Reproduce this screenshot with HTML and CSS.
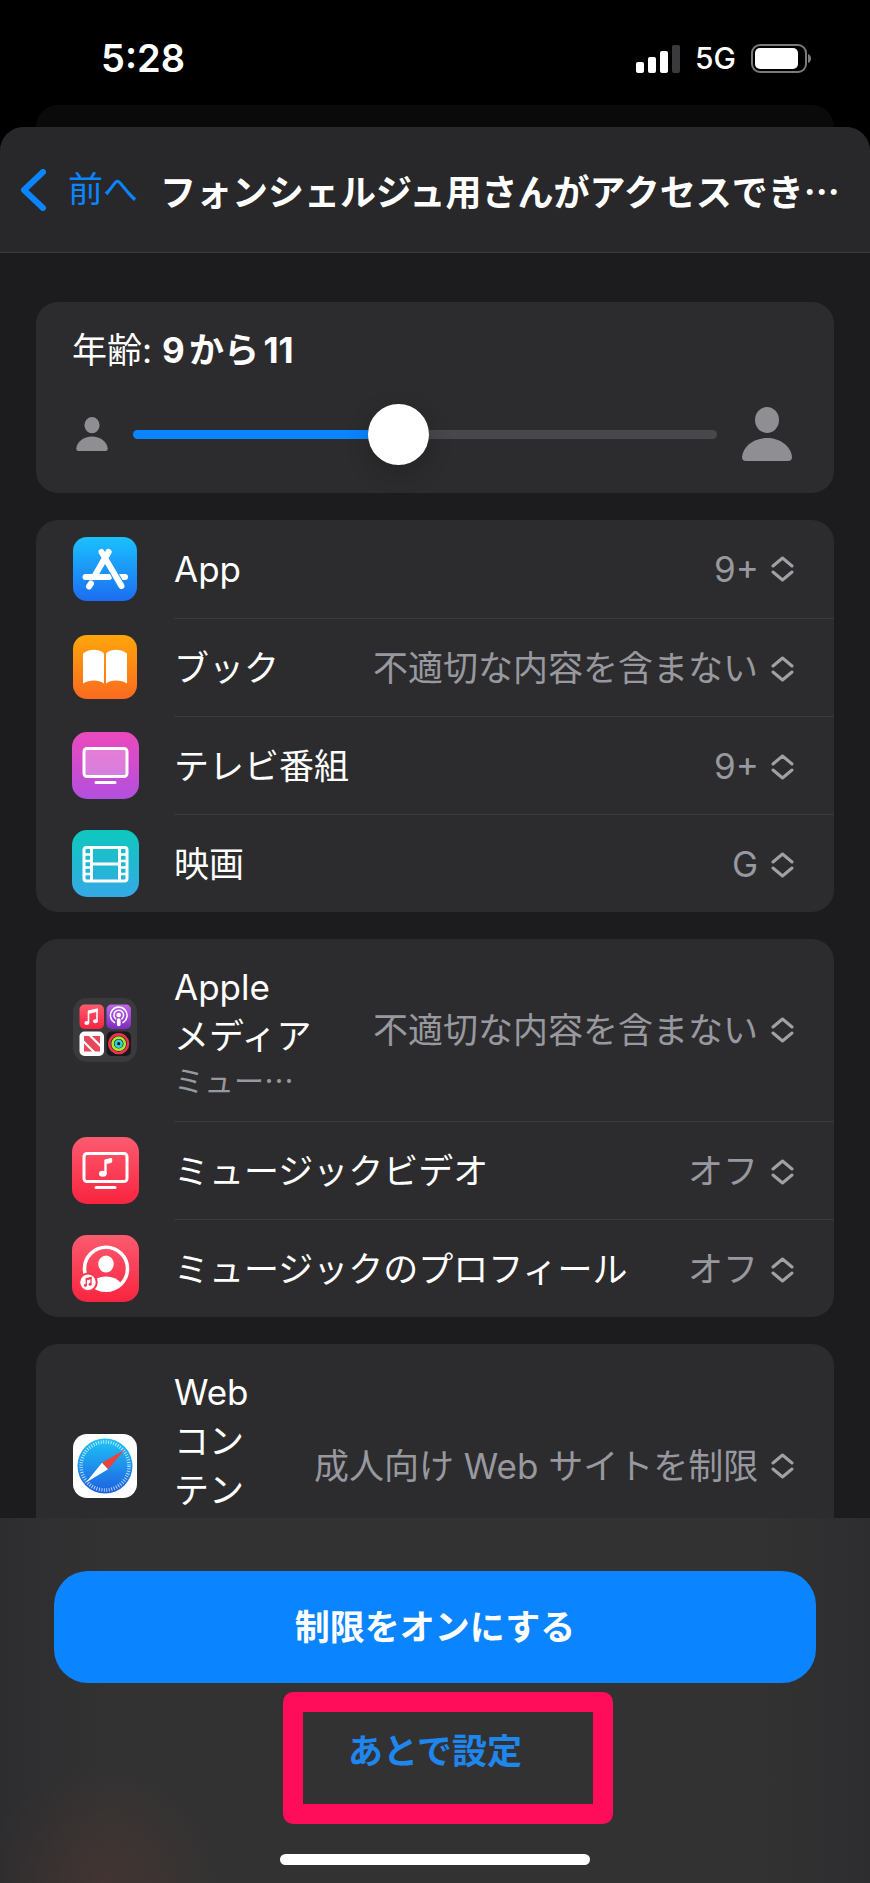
FILE: index.html
```html
<!DOCTYPE html>
<html lang="ja">
<head>
  <meta charset="UTF-8" />
  <meta name="viewport" content="width=device-width, initial-scale=1.0" />
  <title>コンテンツの制限</title>
  <link rel="stylesheet" href="styles.css">
</head>
<body>
  <div class="status-bar">
    <span class="time">5:28</span>
    <div class="status-icons">
      <svg width="44" height="28" viewBox="0 0 44 28" fill="#fff">
        <rect x="0" y="17" width="8" height="11" rx="2" />
        <rect x="12" y="12" width="8" height="16" rx="2" />
        <rect x="24" y="6" width="8" height="22" rx="2" />
        <rect x="36" y="0" width="8" height="28" rx="2" fill="#3a3a3c" />
      </svg>
      <span class="network">5G</span>
      <svg width="60" height="29" viewBox="0 0 60 29">
        <rect x="1" y="1" width="54" height="27" rx="8" fill="none" stroke="#7a7a7c" stroke-width="2" />
        <rect x="4" y="4" width="43" height="21" rx="5" fill="#fff" />
        <path d="M57 10q3 1 3 4.500t-3 4.500z" fill="#7a7a7c" />
      </svg>
    </div>
  </div>

  <div class="sheet-behind"></div>

  <div class="sheet">
    <header class="nav">
      <a href="#" class="back">
        <svg width="26" height="42" viewBox="0 0 26 42" fill="none" stroke="#0a84ff" stroke-width="6" stroke-linecap="round" stroke-linejoin="round">
          <path d="M23 3L4 21l19 18" />
        </svg>
        前へ
      </a>
      <h1>フォンシェルジュ用さんがアクセスでき…</h1>
    </header>

    <main class="content">
      <section class="card age">
        <label for="age">年齢: <b>9から11</b></label>
        <div class="slider-row">
          <svg width="32" height="34" viewBox="0 0 50 54" fill="#8e8e93">
            <ellipse cx="25" cy="13" rx="12" ry="13" />
            <path d="M4 54q-4 0-4-4C1 39 12 31 25 31s24 8 25 19q0 4-4 4z" />
          </svg>
          <input type="range" id="age" min="0" max="100" value="45">
          <svg width="50" height="54" viewBox="0 0 50 54" fill="#8e8e93">
            <ellipse cx="25" cy="13" rx="12" ry="13" />
            <path d="M4 54q-4 0-4-4C1 39 12 31 25 31s24 8 25 19q0 4-4 4z" />
          </svg>
        </div>
      </section>

      <section class="card">
        <div class="row">
          <div class="icon">
            <svg width="64" height="64" viewBox="0 0 64 64">
              <defs><linearGradient id="gApp" x2="0" y2="1"><stop stop-color="#1bc1fd" /><stop offset="1" stop-color="#1c6df2" /></linearGradient></defs>
              <rect width="64" height="64" rx="14" fill="url(#gApp)" />
              <g fill="none" stroke="#fff" stroke-width="6" stroke-linecap="round">
                <path d="M35.500 15L21 40M18 46.500l-2 3M12.500 40H36M46 40h6" />
                <path d="M28.500 15l20 34" stroke="#1e97f8" stroke-width="8" stroke-linecap="butt" />
                <path d="M28.500 15l20 34" />
                <path d="M35.500 15l-6 10.500" />
              </g>
            </svg>
          </div>
          <div class="row-body">
            <label for="app">App</label>
            <div class="picker">
              <select id="app"><option>9+</option></select>
              <svg class="updown" viewBox="0 0 23 26"><path d="M2 10l9.500-8L21 10M2 16l9.500 8L21 16" /></svg>
            </div>
          </div>
        </div>

        <div class="row">
          <div class="icon">
            <svg width="64" height="64" viewBox="0 0 64 64">
              <defs><linearGradient id="gBook" x2="0" y2="1"><stop stop-color="#ffa50a" /><stop offset="1" stop-color="#fa6a20" /></linearGradient></defs>
              <rect width="64" height="64" rx="14" fill="url(#gBook)" />
              <path d="M10 18.500C15 14 26 13 31 18.500V48.500c-5-4-15-4-21 0zM54 18.500C49 14 38 13 33 18.500V48.500c5-4 15-4 21 0z" fill="#fff" />
            </svg>
          </div>
          <div class="row-body">
            <label for="book">ブック</label>
            <div class="picker">
              <select id="book"><option>不適切な内容を含まない</option></select>
              <svg class="updown" viewBox="0 0 23 26"><path d="M2 10l9.500-8L21 10M2 16l9.500 8L21 16" /></svg>
            </div>
          </div>
        </div>

        <div class="row">
          <div class="icon">
            <svg width="67" height="67" viewBox="0 0 67 67">
              <defs><linearGradient id="gTv" x2="0" y2="1"><stop stop-color="#ec49bd" /><stop offset="1" stop-color="#b150de" /></linearGradient></defs>
              <rect width="67" height="67" rx="15" fill="url(#gTv)" />
              <rect x="12" y="16.500" width="43" height="28" rx="3" fill="#fff" fill-opacity=".28" stroke="#fff" stroke-width="3" />
              <path d="M24 50.500h19" stroke="#fff" stroke-width="3" stroke-linecap="round" />
            </svg>
          </div>
          <div class="row-body">
            <label for="tv">テレビ番組</label>
            <div class="picker">
              <select id="tv"><option>9+</option></select>
              <svg class="updown" viewBox="0 0 23 26"><path d="M2 10l9.500-8L21 10M2 16l9.500 8L21 16" /></svg>
            </div>
          </div>
        </div>

        <div class="row">
          <div class="icon">
            <svg width="67" height="67" viewBox="0 0 67 67">
              <defs><linearGradient id="gMovie" x2="0" y2="1"><stop stop-color="#0ec8be" /><stop offset="1" stop-color="#35a9e6" /></linearGradient></defs>
              <rect width="67" height="67" rx="15" fill="url(#gMovie)" />
              <g fill="none" stroke="#fff" stroke-width="3">
                <rect x="12" y="17.500" width="43" height="33.500" rx="2.500" />
                <path d="M19.500 17v34M47.500 17v34M19.500 34h28" />
                <path d="M11.500 24.500h8M11.500 31h8M11.500 37.500h8M11.500 44h8M47.500 24.500h8M47.500 31h8M47.500 37.500h8M47.500 44h8" stroke-width="2.500" />
              </g>
            </svg>
          </div>
          <div class="row-body">
            <label for="movie">映画</label>
            <div class="picker">
              <select id="movie"><option>G</option></select>
              <svg class="updown" viewBox="0 0 23 26"><path d="M2 10l9.500-8L21 10M2 16l9.500 8L21 16" /></svg>
            </div>
          </div>
        </div>
      </section>

      <section class="card">
        <div class="row">
          <div class="icon">
            <svg width="64" height="64" viewBox="0 0 64 64">
              <defs>
                <linearGradient id="gRed" x2="0" y2="1"><stop stop-color="#fb5b6f" /><stop offset="1" stop-color="#f9243f" /></linearGradient>
                <linearGradient id="gPod" x2="0" y2="1"><stop stop-color="#c066ea" /><stop offset="1" stop-color="#7d2cc0" /></linearGradient>
              </defs>
              <rect width="64" height="64" rx="14" fill="#3a3a3c" />
              <rect x="6.500" y="6.500" width="24.500" height="24.500" rx="5" fill="url(#gRed)" />
              <path d="M15.500 25.500V14l8.500-2v12" fill="none" stroke="#fff" stroke-width="1.600" />
              <path d="M15 12.500l9.700-2.300v3.600L15 16z" fill="#fff" />
              <ellipse cx="13.800" cy="25" rx="2.400" ry="2" fill="#fff" />
              <ellipse cx="22.400" cy="23.200" rx="2.400" ry="2" fill="#fff" />
              <rect x="33.500" y="6.500" width="24.500" height="24.500" rx="5" fill="url(#gPod)" />
              <g fill="none" stroke="#fff" stroke-width="1.500" stroke-linecap="round">
                <path d="M41.500 24.500a8.300 8.300 0 1 1 8.500 0" />
                <path d="M42.700 20.800a4.800 4.800 0 1 1 6.100 0" />
              </g>
              <circle cx="45.700" cy="17" r="2.300" fill="#fff" />
              <rect x="43.900" y="20.300" width="3.700" height="8" rx="1.800" fill="#fff" />
              <rect x="6.500" y="33.500" width="24.500" height="24.500" rx="5" fill="#fff" />
              <path d="M11 38h5l11 11v4.500h-5L11 42.500zM19 38h8v8zM11 45.500v8h8z" fill="#e5485a" />
              <rect x="33.500" y="33.500" width="24.500" height="24.500" rx="5" fill="#19181a" />
              <g fill="none" stroke-width="2.600">
                <circle cx="45.700" cy="45.700" r="9.300" stroke="#f0324f" />
                <circle cx="45.700" cy="45.700" r="6.100" stroke="#a7e92c" />
                <circle cx="45.700" cy="45.700" r="2.900" stroke="#35cfe0" />
              </g>
            </svg>
          </div>
          <div class="row-body">
            <label for="media">Apple <span class="nowrap">メディア</span><small>ミュー…</small></label>
            <div class="picker">
              <select id="media"><option>不適切な内容を含まない</option></select>
              <svg class="updown" viewBox="0 0 23 26"><path d="M2 10l9.500-8L21 10M2 16l9.500 8L21 16" /></svg>
            </div>
          </div>
        </div>

        <div class="row">
          <div class="icon">
            <svg width="67" height="67" viewBox="0 0 67 67">
              <rect width="67" height="67" rx="15" fill="url(#gRed)" />
              <rect x="12" y="16.500" width="43" height="28" rx="3" fill="none" stroke="#fff" stroke-width="3" />
              <path d="M24 50.500h19" stroke="#fff" stroke-width="3" stroke-linecap="round" />
              <path d="M32.300 23.800q0-1.200 1.200-1.500l5.500-1.300q1.200-.2 1.200 1v2.600q0 1-1.200 1.300l-4.300 1V37h-2.400z" fill="#fff" />
              <ellipse cx="30.800" cy="36.800" rx="3.900" ry="3" fill="#fff" />
            </svg>
          </div>
          <div class="row-body">
            <label for="mv">ミュージックビデオ</label>
            <div class="picker">
              <select id="mv"><option>オフ</option></select>
              <svg class="updown" viewBox="0 0 23 26"><path d="M2 10l9.500-8L21 10M2 16l9.500 8L21 16" /></svg>
            </div>
          </div>
        </div>

        <div class="row">
          <div class="icon">
            <svg width="67" height="67" viewBox="0 0 67 67">
              <defs><clipPath id="disc"><circle cx="34" cy="33.700" r="22" /></clipPath></defs>
              <rect width="67" height="67" rx="15" fill="url(#gRed)" />
              <circle cx="34" cy="33.700" r="21.500" fill="none" stroke="#fff" stroke-width="3.600" />
              <ellipse cx="34" cy="29" rx="7.800" ry="8.600" fill="#fff" />
              <ellipse cx="34" cy="54" rx="17" ry="12.500" fill="#fff" clip-path="url(#disc)" />
              <circle cx="16" cy="47.300" r="9.700" fill="#fa3950" />
              <circle cx="16" cy="47.300" r="7.700" fill="#fff" />
              <path d="M14.300 50v-5.700l4.700-1.200v5.900" fill="none" stroke="#fa3950" stroke-width="1.300" />
              <path d="M13.700 43.300l5.900-1.500v2.200l-5.900 1.500z" fill="#fa3950" />
              <circle cx="13.400" cy="50.300" r="1.500" fill="#fa3950" />
              <circle cx="18.100" cy="49.200" r="1.500" fill="#fa3950" />
            </svg>
          </div>
          <div class="row-body">
            <label for="profile">ミュージックのプロフィール</label>
            <div class="picker">
              <select id="profile"><option>オフ</option></select>
              <svg class="updown" viewBox="0 0 23 26"><path d="M2 10l9.500-8L21 10M2 16l9.500 8L21 16" /></svg>
            </div>
          </div>
        </div>
      </section>

      <section class="card">
        <div class="row">
          <div class="icon">
            <svg width="64" height="64" viewBox="0 0 64 64">
              <defs><linearGradient id="gWeb" x2="0" y2="1"><stop stop-color="#1fc4f7" /><stop offset="1" stop-color="#1e5fe0" /></linearGradient></defs>
              <rect width="64" height="64" rx="14" fill="#fff" />
              <circle cx="32" cy="32" r="27.500" fill="url(#gWeb)" />
              <circle cx="32" cy="32" r="24" fill="none" stroke="#fff" stroke-opacity=".75" stroke-width="3.500" stroke-dasharray=".9 1.613" />
              <path d="M51.500 16L29 28.700l6 6.500z" fill="#ee4238" />
              <path d="M13 48.500L29 28.700l6 6.500z" fill="#fff" />
            </svg>
          </div>
          <div class="row-body">
            <label for="web">Web コンテンツ</label>
            <div class="picker">
              <select id="web"><option>成人向け Web サイトを制限</option></select>
              <svg class="updown" viewBox="0 0 23 26"><path d="M2 10l9.500-8L21 10M2 16l9.500 8L21 16" /></svg>
            </div>
          </div>
        </div>
      </section>
    </main>

    <footer class="actions">
      <button class="btn primary">制限をオンにする</button>
      <div class="later">
        <button class="btn">あとで設定</button>
        <div class="highlight"></div>
      </div>
      <div class="home-indicator"></div>
    </footer>
  </div>
</body>
</html>
```
FILE: styles.css
```css
* {
  box-sizing: border-box;
}
body {
  display: flex;
  flex-direction: column;
  height: 100vh;
  margin: 0;
  background-color: #000;
  color: #fff;
  font-family: Inter, "Noto Sans CJK JP", sans-serif;
  font-size: 35px;
  line-height: 49px;
  text-autospace: normal;
}
svg {
  display: block;
  flex-shrink: 0;
}
button, select {
  font: inherit;
  color: inherit;
  background: none;
  border: none;
  padding: 0;
  margin: 0;
}

/* status bar */
.status-bar {
  display: flex;
  justify-content: space-between;
  align-items: center;
  flex-shrink: 0;
  height: 105px;
  padding: 12px 59px 0 101px;
}
.time {
  font-size: 38px;
  font-weight: 600;
}
.status-icons {
  display: flex;
  align-items: center;
  gap: 15px;
}
.network {
  font-size: 30px;
  font-weight: 500;
}

/* sheet */
.sheet-behind {
  flex-shrink: 0;
  height: 22px;
  margin: 0 36px;
  background-color: #0a0a0b;
  border-radius: 22px 22px 0 0;
}
.sheet {
  display: flex;
  flex-direction: column;
  flex: 1;
  min-height: 0;
  background-color: #1c1c1e;
  border-radius: 24px 24px 0 0;
  overflow: hidden;
}
.nav {
  display: flex;
  align-items: center;
  flex-shrink: 0;
  gap: 22px;
  height: 126px;
  padding: 0 20px;
  background-color: #28282a;
  border-bottom: 1px solid #3a3a3c;
}
.back {
  display: flex;
  align-items: center;
  flex-shrink: 0;
  gap: 22px;
  color: #0a84ff;
  text-decoration: none;
}
.nav h1 {
  margin: 0;
  font-family: "Noto Sans CJK JP", sans-serif;
  font-size: 36px;
  font-weight: 700;
  line-height: 48px;
  white-space: nowrap;
}

/* cards */
.content {
  display: flex;
  flex-direction: column;
  flex: 1;
  gap: 27px;
  min-height: 0;
  padding: 49px 36px 0;
  overflow-y: auto;
  scrollbar-width: none;
}
.card {
  flex-shrink: 0;
  background-color: #2c2c2e;
  border-radius: 22px;
}
.age {
  padding: 24px 42px 14px 36px;
}
.age label {
  display: block;
}
.slider-row {
  display: flex;
  align-items: center;
  gap: 25px;
  height: 90px;
  margin-top: 14px;
  padding-left: 4px;
}
.slider-row input {
  -webkit-appearance: none;
  appearance: none;
  flex: 1;
  min-width: 0;
  height: 9px;
  margin: 0;
  border-radius: 5px;
  background: linear-gradient(to right, #0a84ff 45%, #48484c 45%);
}
.slider-row input::-webkit-slider-thumb {
  -webkit-appearance: none;
  width: 61px;
  height: 61px;
  border-radius: 50%;
  background-color: #fff;
  box-shadow: 0 8px 24px rgba(0, 0, 0, 0.2);
}
.row {
  display: flex;
}
.icon {
  display: flex;
  align-items: center;
  justify-content: center;
  flex-shrink: 0;
  width: 138px;
}
.row-body {
  display: flex;
  align-items: center;
  justify-content: space-between;
  flex: 1;
  gap: 48px;
  min-width: 0;
  min-height: 98px;
  padding: 24px 40px 24px 0;
}
.row + .row .row-body {
  padding-top: 25px;
  border-top: 1px solid #3a3a3c;
  padding-bottom: 23px;
}
.row small {
  display: block;
  font-family: "Noto Sans CJK JP", sans-serif;
  font-size: 30px;
  line-height: 36px;
  color: #98989f;
  white-space: nowrap;
}
.nowrap {
  white-space: nowrap;
}
.picker {
  display: flex;
  align-items: center;
  flex-shrink: 0;
  gap: 12px;
  color: #98989f;
}
.picker select {
  -webkit-appearance: none;
  appearance: none;
}
.updown {
  width: 23px;
  height: 26px;
  fill: none;
  stroke: #a0a0a6;
  stroke-width: 3;
  stroke-linecap: round;
  stroke-linejoin: round;
}

/* bottom actions */
.actions {
  display: flex;
  flex-direction: column;
  align-items: center;
  flex-shrink: 0;
  padding: 53px 54px 18px;
  background:
    radial-gradient(circle at 12% 100%, rgba(90, 56, 48, 0.4), transparent 120px),
    linear-gradient(to right, #2d2d2f, #323233 12%, #323233 88%, #2d2d2f);
}
.btn {
  width: 100%;
  height: 112px;
  border-radius: 34px;
  font-weight: 700;
  color: #1f86ee;
  cursor: pointer;
}
.primary {
  background-color: #0a84ff;
  color: #fff;
}
.later {
  position: relative;
  width: 328px;
  margin: 12px 0 47px;
}
.highlight {
  position: absolute;
  inset: -3px -14px -17px 12px;
  border: 20px solid #ff0c5a;
  border-radius: 10px;
  pointer-events: none;
}
.home-indicator {
  width: 310px;
  height: 11px;
  border-radius: 6px;
  background-color: #fff;
}
```
